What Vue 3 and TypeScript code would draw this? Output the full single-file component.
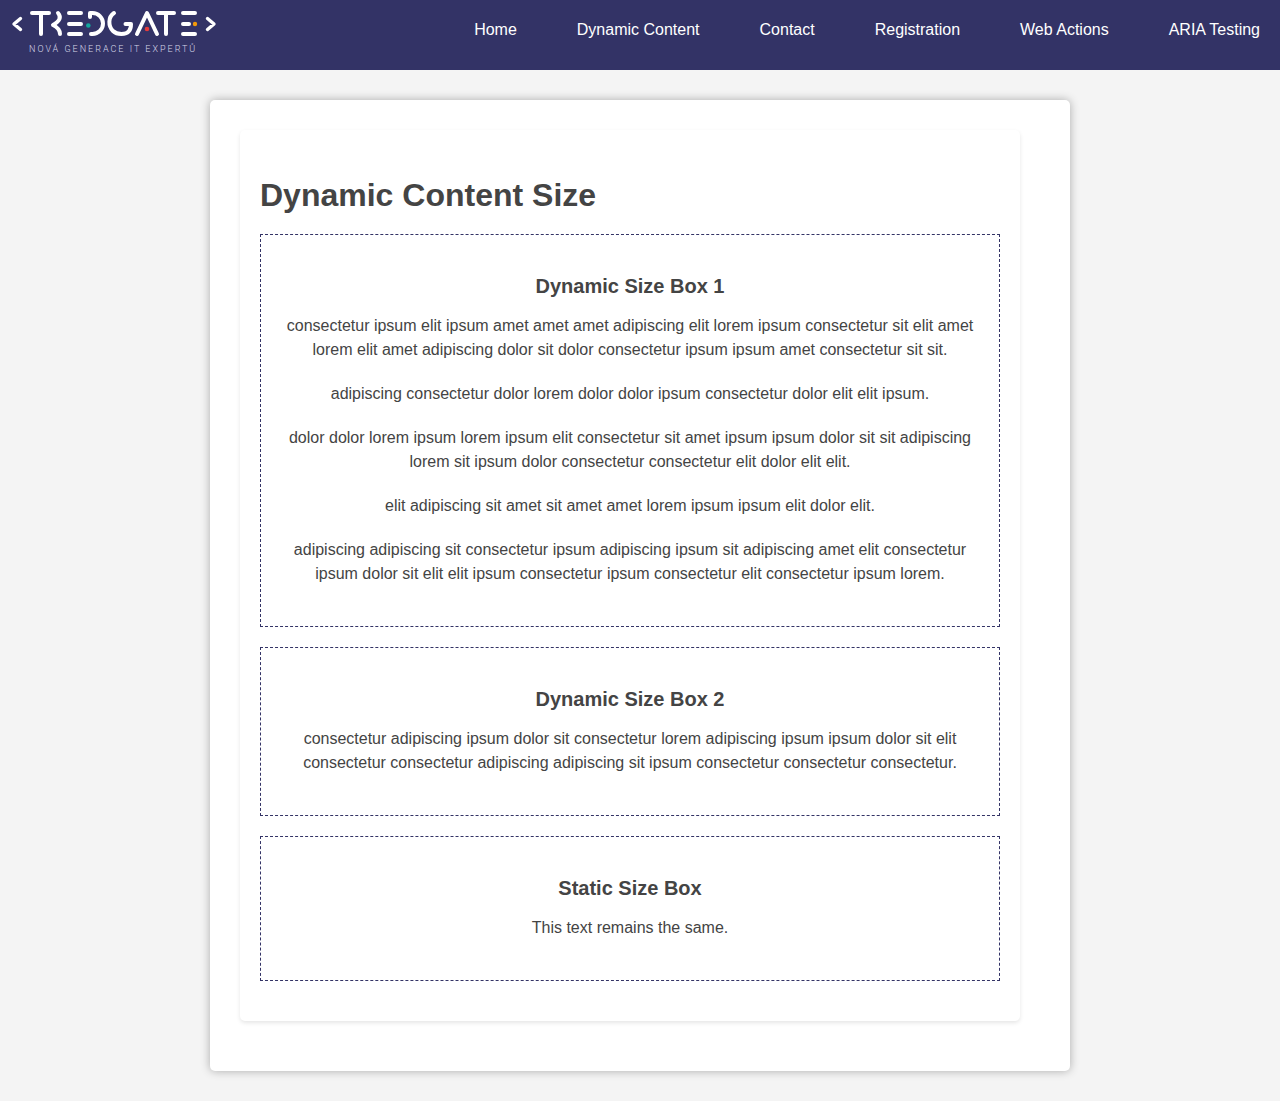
<script setup lang="ts">
interface ContentBox {
  title: string
  paragraphs: string[]
}

const links: string[] = ['Home', 'Dynamic Content', 'Contact', 'Registration', 'Web Actions', 'ARIA Testing']

const boxes: ContentBox[] = [
  {
    title: 'Dynamic Size Box 1',
    paragraphs: [
      'consectetur ipsum elit ipsum amet amet amet adipiscing elit lorem ipsum consectetur sit elit amet lorem elit amet adipiscing dolor sit dolor consectetur ipsum ipsum amet consectetur sit sit.',
      'adipiscing consectetur dolor lorem dolor dolor ipsum consectetur dolor elit elit ipsum.',
      'dolor dolor lorem ipsum lorem ipsum elit consectetur sit amet ipsum ipsum dolor sit sit adipiscing lorem sit ipsum dolor consectetur consectetur elit dolor elit elit.',
      'elit adipiscing sit amet sit amet amet lorem ipsum ipsum elit dolor elit.',
      'adipiscing adipiscing sit consectetur ipsum adipiscing ipsum sit adipiscing amet elit consectetur ipsum dolor sit elit elit ipsum consectetur ipsum consectetur elit consectetur ipsum lorem.',
    ],
  },
  {
    title: 'Dynamic Size Box 2',
    paragraphs: [
      'consectetur adipiscing ipsum dolor sit consectetur lorem adipiscing ipsum ipsum dolor sit elit consectetur consectetur adipiscing adipiscing sit ipsum consectetur consectetur consectetur.',
    ],
  },
  { title: 'Static Size Box', paragraphs: ['This text remains the same.'] },
]
</script>

<template>
  <header class="site-header">
    <a class="logo" href="#" aria-label="Tredgate">
      <svg width="228" height="60" viewBox="0 0 228 60" fill="none" stroke="#fff" stroke-width="4" stroke-linecap="round" stroke-linejoin="round">
        <path stroke-width="3.4" d="M20.500 18.500L14 24l6.500 5.500M207.500 18.500L214 24l-6.500 5.500" />
        <path d="M32 13H49M41 13V34" />
        <path d="M58 13C61.500 17 60 21 53 25C57 27 60 30 60 34" />
        <path d="M69 13H81M69 24H81M69 34H81" />
        <path d="M90 17V13H92.500A10.500 10.500 0 0 1 92.500 34H91" />
        <path d="M114 13C108 17 108 26 113 31C117 35 126 35 129 31C131 29 131 27 131 24H125.500" />
        <path d="M137 34L147 13L157 34" />
        <path d="M158 13H174M166 13V34" />
        <path d="M183 13H195M183 24H189M183 34H195" />
        <g stroke="none">
          <circle cx="88.300" cy="25.500" r="2.300" fill="#12a79d" />
          <circle cx="147" cy="29" r="2.300" fill="#e63b3b" />
          <circle cx="195" cy="24" r="2.200" fill="#f39a0b" />
        </g>
        <text class="tagline" x="29" y="52">NOVÁ GENERACE IT EXPERTŮ</text>
      </svg>
    </a>
    <nav class="nav" aria-label="Main">
      <a v-for="link in links" :key="link" href="#">{{ link }}</a>
    </nav>
  </header>

  <main class="container">
    <section class="panel">
      <h1>Dynamic Content Size</h1>
      <article v-for="box in boxes" :key="box.title" class="box">
        <h2>{{ box.title }}</h2>
        <p v-for="text in box.paragraphs" :key="text">{{ text }}</p>
      </article>
    </section>
  </main>
</template>

<style>
body {
  background: #f4f4f4;
}
</style>

<style scoped>
.site-header,
.container {
  font-family: Arial, "Liberation Sans", sans-serif;
  font-size: 16px;
  line-height: 24px;
}

.site-header {
  display: flex;
  justify-content: space-between;
  align-items: flex-start;
  min-height: 70px;
  background: #333366;
}

.logo,
.logo svg {
  display: block;
}

.tagline {
  fill: #d6d6e6;
  stroke: none;
  font-family: Roboto, sans-serif;
  font-size: 9px;
  font-weight: 300;
  letter-spacing: 2px;
}

.nav {
  display: flex;
  gap: 60px;
  padding: 18px 20px;
}

.nav a {
  color: #fff;
  text-decoration: none;
}

.container {
  box-sizing: border-box;
  max-width: 860px;
  margin: 30px auto;
  padding: 30px;
  background: #fff;
  border-radius: 5px;
  box-shadow: 0 0 10px rgba(0, 0, 0, 0.3);
  color: #444;
}

.panel {
  margin: 0 20px 20px 0;
  padding: 20px;
  border-radius: 5px;
  box-shadow: 0 2px 4px rgba(0, 0, 0, 0.1);
}

h1 {
  margin: 0 0 15px;
  padding-top: 21px;
  font-size: 32px;
  line-height: 48px;
}

.box {
  margin-bottom: 20px;
  padding: 20px;
  border: 1px dashed #333366;
  text-align: center;
}

h2 {
  margin: 16px 0 13px;
  font-size: 20px;
  line-height: 30px;
}

p {
  margin: 0 0 20px;
}
</style>
